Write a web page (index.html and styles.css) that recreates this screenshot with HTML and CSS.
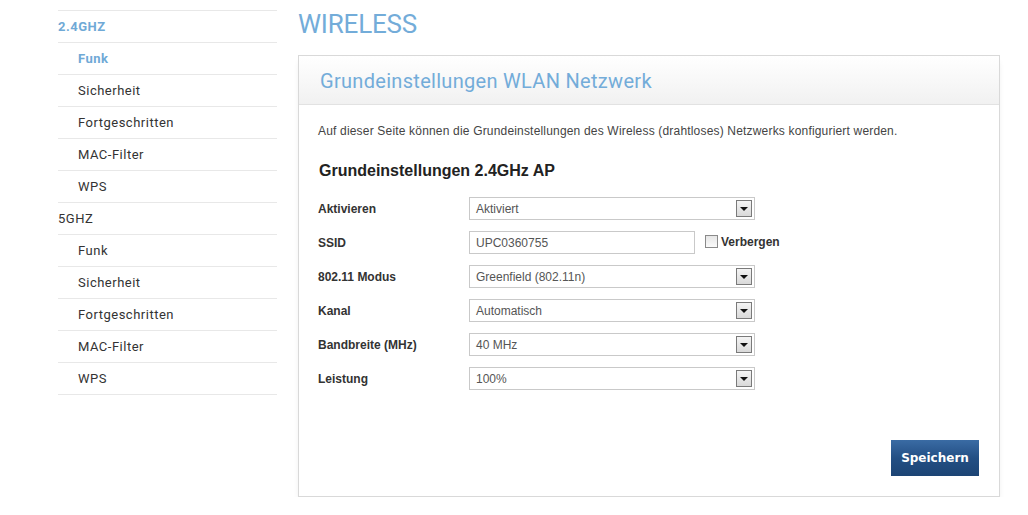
FILE: index.html
```html
<!DOCTYPE html>
<html lang="de">
<head>
<meta charset="utf-8">
<title>Wireless</title>
<link rel="stylesheet" href="styles.css">
</head>
<body>
<div class="page">
  <nav class="sidebar">
    <ul class="nav">
      <li class="nav-item group active">2.4GHZ</li>
      <li class="nav-item sub active">Funk</li>
      <li class="nav-item sub">Sicherheit</li>
      <li class="nav-item sub">Fortgeschritten</li>
      <li class="nav-item sub">MAC-Filter</li>
      <li class="nav-item sub">WPS</li>
      <li class="nav-item group">5GHZ</li>
      <li class="nav-item sub">Funk</li>
      <li class="nav-item sub">Sicherheit</li>
      <li class="nav-item sub">Fortgeschritten</li>
      <li class="nav-item sub">MAC-Filter</li>
      <li class="nav-item sub">WPS</li>
    </ul>
  </nav>
  <main class="main">
    <h1 class="page-title">WIRELESS</h1>
    <section class="card">
      <header class="card-header">Grundeinstellungen WLAN Netzwerk</header>
      <div class="card-body">
        <p class="desc">Auf dieser Seite können die Grundeinstellungen des Wireless (drahtloses) Netzwerks konfiguriert werden.</p>
        <h3 class="section-title">Grundeinstellungen 2.4GHz AP</h3>
        <div class="form">
          <div class="row">
            <label class="label">Aktivieren</label>
            <div class="select"><span class="value">Aktiviert</span><span class="arrow"></span></div>
          </div>
          <div class="row">
            <label class="label">SSID</label>
            <div class="input">UPC0360755</div>
            <span class="check"><span class="box"></span>Verbergen</span>
          </div>
          <div class="row">
            <label class="label">802.11 Modus</label>
            <div class="select"><span class="value">Greenfield (802.11n)</span><span class="arrow"></span></div>
          </div>
          <div class="row">
            <label class="label">Kanal</label>
            <div class="select"><span class="value">Automatisch</span><span class="arrow"></span></div>
          </div>
          <div class="row">
            <label class="label">Bandbreite (MHz)</label>
            <div class="select"><span class="value">40 MHz</span><span class="arrow"></span></div>
          </div>
          <div class="row">
            <label class="label">Leistung</label>
            <div class="select"><span class="value">100%</span><span class="arrow"></span></div>
          </div>
        </div>
        <div class="actions">
          <button class="btn">Speichern</button>
        </div>
      </div>
    </section>
  </main>
</div>
</body>
</html>
```

FILE: styles.css
```css
* { box-sizing: border-box; }
html, body { margin: 0; padding: 0; background: #fff; }
body { font-family: "Liberation Sans", Arial, sans-serif; color: #333; }

.page {
  display: flex;
  padding-left: 58px;
  gap: 21px;
}

.sidebar { width: 219px; padding-top: 10px; }
.nav { list-style: none; margin: 0; padding: 0; border-top: 1px solid #e8e8e8; }
.nav-item {
  height: 32px;
  line-height: 31px;
  border-bottom: 1px solid #e8e8e8;
  font-family: Roboto, "Open Sans", sans-serif;
  font-size: 13px;
  letter-spacing: 0.5px;
  color: #333;
}
.nav-item.sub { padding-left: 20px; }
.nav-item.active { color: #6fa9d6; font-weight: 700; }

.main { width: 702px; }
.page-title {
  margin: 0;
  height: 55px;
  padding-top: 9px;
  font-family: Roboto, "Open Sans", sans-serif;
  font-weight: 400;
  font-size: 26px;
  line-height: 30px;
  color: #73acd9;
  letter-spacing: -0.2px;
}

.card {
  border: 1px solid #d9d9d9;
  background: #fff;
  box-shadow: 0 5px 6px -2px rgba(0,0,0,0.12);
  height: 442px;
  display: flex;
  flex-direction: column;
}
.card-header {
  height: 49px;
  border-bottom: 1px solid #e2e2e2;
  background: linear-gradient(#ffffff, #f1f1f1);
  padding-left: 21px;
  line-height: 50px;
  font-family: Roboto, "Open Sans", sans-serif;
  font-size: 20px;
  color: #73acd9;
  letter-spacing: 0.3px;
}
.card-body {
  flex: 1;
  padding: 19px 20px 20px 19px;
  display: flex;
  flex-direction: column;
}
.desc {
  margin: 0;
  font-size: 12px;
  line-height: 14px;
  color: #444;
  letter-spacing: 0.18px;
}
.section-title {
  margin: 23px 0 0 1px;
  font-size: 16px;
  line-height: 20px;
  font-weight: 700;
  color: #222;
}
.form { margin-top: 16px; display: flex; flex-direction: column; gap: 11px; }
.row { display: flex; align-items: center; height: 23px; }
.label {
  width: 151px;
  font-size: 12px;
  font-weight: 700;
  color: #333;
}
.select, .input {
  height: 23px;
  border: 1px solid #c9c9c9;
  background: #fff;
  font-size: 12px;
  color: #555;
  display: flex;
  align-items: center;
  padding-left: 6px;
}
.select { width: 286px; justify-content: space-between; padding-right: 2px; }
.input { width: 226px; }
.arrow {
  width: 16px;
  height: 17px;
  border: 1px solid #7a7a7a;
  background: linear-gradient(#f4f4f4, #d9d9d9);
  display: flex;
  align-items: center;
  justify-content: center;
}
.arrow::after {
  content: "";
  border-left: 4px solid transparent;
  border-right: 4px solid transparent;
  border-top: 4px solid #111;
}
.check {
  display: flex;
  align-items: center;
  margin-left: 10px;
  font-size: 12px;
  font-weight: 700;
  color: #333;
  position: relative;
  top: -1px;
}
.box {
  width: 13px;
  height: 13px;
  border: 1px solid #8a8a8a;
  background: linear-gradient(#e6e6e6, #fafafa);
  margin-right: 3px;
}
.actions { margin-top: auto; display: flex; justify-content: flex-end; }
.btn {
  width: 88px;
  height: 36px;
  border: none;
  background: linear-gradient(#3a6ba4, #234f84 50%, #1c4474);
  color: #fff;
  font-family: "DejaVu Sans", Verdana, sans-serif;
  font-weight: 700;
  font-size: 12px;
  padding: 0;
}
```
